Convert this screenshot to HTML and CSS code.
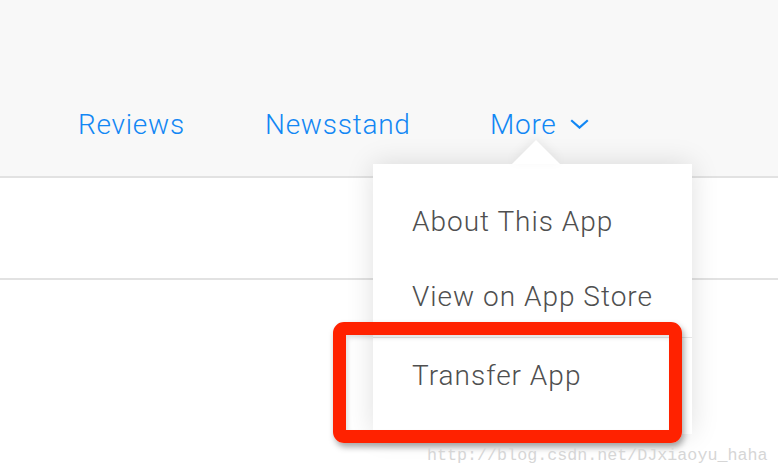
FILE: index.html
```html
<!DOCTYPE html>
<html>
<head>
    <meta charset="UTF-8">
    <title>App Details</title>
    <link rel="stylesheet" href="styles.css">
</head>
<body>
    <div class="page">
        <header class="topbar">
            <nav class="tabs">
                <a href="#">Reviews</a>
                <a href="#">Newsstand</a>
                <a href="#" class="more">More
                    <svg class="chevron" width="19" height="10" viewBox="0 0 19 10">
                        <polyline points="1.2,1.2 9.5,8.6 17.8,1.2" fill="none" stroke="#1287f4" stroke-width="2.2"/>
                    </svg>
                </a>
            </nav>
        </header>
        <section class="band"></section>

        <div class="popover">
            <ul class="menu">
                <li class="item">About This App</li>
                <li class="item sep">View on App Store</li>
                <li class="item">Transfer App</li>
            </ul>
        </div>

        <div class="callout"></div>
        <p class="watermark">http://blog.csdn.net/DJxiaoyu_haha</p>
    </div>
</body>
</html>
```

FILE: styles.css
```css
body, html {
    margin: 0;
    padding: 0;
    background: #ffffff;
    font-family: Roboto, "Liberation Sans", Arial, sans-serif;
    font-weight: 300;
}
.page {
    position: relative;
    width: 778px;
    height: 476px;
    overflow: hidden;
}
.topbar {
    height: 176px;
    background: #f8f8f8;
    border-bottom: 2px solid #e2e2e2;
}
.tabs {
    display: grid;
    grid-template-columns: 187px 225px auto;
    padding: 109px 0 0 78px;
}
.tabs a {
    font-size: 28px;
    line-height: 32px;
    letter-spacing: 0.75px;
    color: #1287f4;
    text-decoration: none;
    white-space: nowrap;
}
.chevron {
    margin-left: 6px;
    vertical-align: 5px;
}
.band {
    height: 100px;
    border-bottom: 2px solid #e2e2e2;
}

/* the dropdown under "More" */
.popover {
    position: absolute;
    left: 373px;
    top: 164px;
    width: 319px;
    height: 270px;
    background: #ffffff;
    box-shadow: 0 0 26px rgba(0, 0, 0, 0.13);
}
.popover::before {
    content: "";
    position: absolute;
    left: 139px;
    top: -24px;
    border-left: 24px solid transparent;
    border-right: 24px solid transparent;
    border-bottom: 24px solid #ffffff;
    filter: drop-shadow(0 -3px 5px rgba(0, 0, 0, 0.06));
}
.menu {
    list-style: none;
    margin: 0;
    padding: 20px 0 0 0;
}
.item {
    padding: 22px 0 21px 39px;
    font-size: 28px;
    line-height: 32px;
    letter-spacing: 1px;
    color: #4f4f4f;
}
.item.sep {
    padding-bottom: 24px;
    border-bottom: 1px solid #e6e6e6;
}

/* red annotation frame */
.callout {
    position: absolute;
    left: 333px;
    top: 322px;
    width: 323px;
    height: 95px;
    border: 13px solid #ff2200;
    border-radius: 11px;
    box-shadow: 2px 4px 6px rgba(0, 0, 0, 0.35), inset 2px 3px 4px rgba(0, 0, 0, 0.12);
}
.watermark {
    position: absolute;
    left: 427px;
    top: 446px;
    margin: 0;
    font-family: "Liberation Mono", monospace;
    font-weight: 400;
    font-size: 16.7px;
    line-height: 20px;
    color: #d6d6d6;
}
```
